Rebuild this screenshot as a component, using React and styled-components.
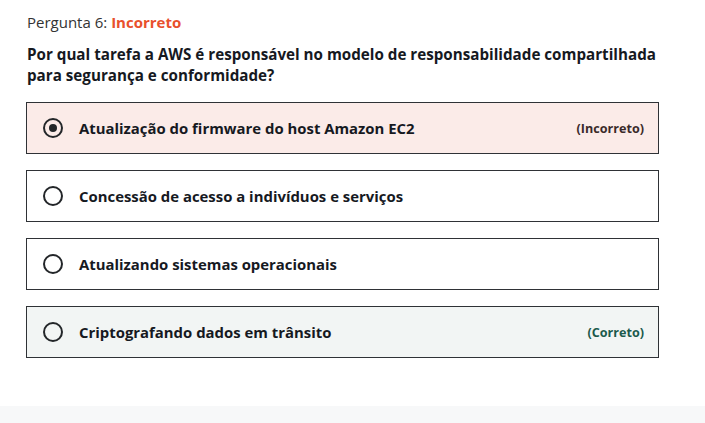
import React from "react";
import styled, { createGlobalStyle } from "styled-components";

const Global = createGlobalStyle`
  html, body { margin: 0; padding: 0; background: #fff; }
  body { font-family: "Open Sans", "Noto Sans", sans-serif; color: #16191f; }
`;

const Page = styled.div`
  display: flex;
  flex-direction: column;
  min-height: 423px;
`;

const Content = styled.div`
  flex: 1;
  padding: 12px 46px 0 27px;
`;

const Footer = styled.div`
  height: 17px;
  background: #f7f8f9;
`;

const Header = styled.div`
  font-size: 15px;
  line-height: 21px;
  color: #333;
`;

const Status = styled.span`
  color: #e8502c;
  font-weight: 700;
`;

const Question = styled.div`
  margin-top: 11px;
  font-size: 15.2px;
  line-height: 21px;
  font-weight: 700;
  color: #16191f;
`;

const Options = styled.div`
  margin-top: 16px;
  margin-left: -1px;
  display: flex;
  flex-direction: column;
  gap: 16px;
`;

const Option = styled.div`
  height: 52px;
  box-sizing: border-box;
  border: 1px solid #2f3236;
  background: ${(p) => (p.$state === "wrong" ? "#fbebe8" : p.$state === "right" ? "#f2f5f4" : "#fff")};
  display: flex;
  align-items: center;
  padding: 0 14px 0 16px;
  gap: 16px;
`;

const Radio = styled.span`
  width: 20px;
  height: 20px;
  box-sizing: border-box;
  border: 2px solid #232629;
  border-radius: 50%;
  display: flex;
  align-items: center;
  justify-content: center;
  flex-shrink: 0;
  &::after {
    content: "";
    display: ${(p) => (p.$checked ? "block" : "none")};
    width: 8px;
    height: 8px;
    border-radius: 50%;
    background: #232629;
  }
`;

const Label = styled.span`
  flex: 1;
  font-size: 14.9px;
  font-weight: 700;
  color: #16191f;
`;

const Tag = styled.span`
  font-size: 12.6px;
  font-weight: 700;
  color: ${(p) => (p.$state === "right" ? "#1b5a4c" : "#3a2a2a")};
`;

const options = [
  { text: "Atualização do firmware do host Amazon EC2", state: "wrong", checked: true, tag: "(Incorreto)" },
  { text: "Concessão de acesso a indivíduos e serviços" },
  { text: "Atualizando sistemas operacionais" },
  { text: "Criptografando dados em trânsito", state: "right", tag: "(Correto)" },
];

export default function App() {
  return (
    <>
      <Global />
      <Page>
        <Content>
          <Header>
            Pergunta 6: <Status>Incorreto</Status>
          </Header>
          <Question>
            Por qual tarefa a AWS é responsável no modelo de responsabilidade compartilhada para segurança e conformidade?
          </Question>
          <Options>
            {options.map((o) => (
              <Option key={o.text} $state={o.state}>
                <Radio $checked={o.checked} />
                <Label>{o.text}</Label>
                {o.tag && <Tag $state={o.state}>{o.tag}</Tag>}
              </Option>
            ))}
          </Options>
        </Content>
        <Footer />
      </Page>
    </>
  );
}
